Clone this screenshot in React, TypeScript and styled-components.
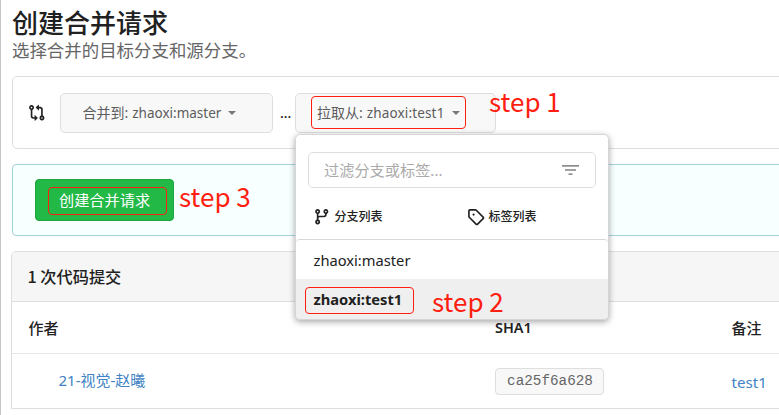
import React from "react";
import styled, { createGlobalStyle } from "styled-components";

const GlobalStyle = createGlobalStyle`
  * { box-sizing: border-box; }
  body {
    margin: 0;
    overflow: hidden;
    background: #fff;
    color: #212121;
    font-family: "Noto Sans", "Noto Sans CJK SC", sans-serif;
  }
`;

const Page = styled.main`
  position: relative;
  width: 779px;
  height: 415px;
  overflow: hidden;
  padding: 5px 0 0 11px;
  border-left: 1px solid #c4c4c6;
`;

const Title = styled.h1`
  margin: 0;
  font: 500 26px/34px "Noto Sans CJK SC", sans-serif;
`;

const Subtitle = styled.p`
  margin: 0;
  height: 37px;
  font: 400 17.45px/22px "Noto Sans CJK SC", sans-serif;
  color: #666;
`;

const CompareBar = styled.section`
  display: flex;
  align-items: flex-start;
  width: 790px;
  height: 73px;
  padding: 16px 0 0 15px;
  border: 1px solid #dededf;
  border-radius: 5px;
`;

const CompareIconSlot = styled.span`
  display: flex;
  width: 32px;
  padding-top: 11px;
`;

const Dots = styled.span`
  width: 22px;
  padding-left: 7px;
  font: 500 14px/39px "Noto Sans", sans-serif;
`;

const BranchSelect = styled.div<{ $width: number; $indent: number }>`
  position: relative;
  display: flex;
  align-items: center;
  width: ${(p) => p.$width}px;
  height: 40px;
  padding-left: ${(p) => p.$indent}px;
  border: 1px solid #dededf;
  border-radius: 5px;
  background: #f8f8f8;
  color: #5c5c5c;
  font-size: 14px;
  line-height: 20px;
  white-space: nowrap;
`;

const BranchName = styled.span<{ $spacing?: number }>`
  margin-left: 4px;
  font-size: 13.5px;
  letter-spacing: ${(p) => p.$spacing ?? 0}px;
`;

const Caret = styled.span`
  margin: 0 0 0 7px;
  border: 4px solid transparent;
  border-top-color: #777;
  border-bottom: 0;
`;

const Dropdown = styled.div`
  position: absolute;
  z-index: 2;
  top: 40px;
  left: -1px;
  width: 314px;
  height: 186px;
  border: 1px solid #d6d6d7;
  border-radius: 5px;
  background: #fff;
  color: #212121;
  box-shadow: 0 2px 6px rgba(34, 36, 38, 0.4);
  overflow: hidden;
`;

const FilterField = styled.div`
  display: flex;
  align-items: center;
  justify-content: space-between;
  height: 36px;
  margin: 17px 12px 0;
  padding: 0 16px 0 15px;
  border: 1px solid #dededf;
  border-radius: 5px;
  color: #aaa;
  font-size: 15.2px;
`;

const Tabs = styled.div`
  display: grid;
  grid-template-columns: 154px 1fr;
  height: 51px;
  padding: 18px 0 0 17px;
`;

const Tab = styled.div`
  display: flex;
  align-items: center;
  gap: 4px;
  height: 22px;
  font: 500 12px/20px "Noto Sans CJK SC", sans-serif;
`;

const TabLabel = styled.span`
  margin-top: -3px;
`;

const Options = styled.div`
  border-top: 1px solid #d9d9da;
  border-radius: 4px;
`;

const Option = styled.div<{ $selected?: boolean }>`
  height: ${(p) => (p.$selected ? 40 : 39)}px;
  padding-left: 17.5px;
  background: ${(p) => (p.$selected ? "#efefef" : "transparent")};
  font-size: 14.7px;
  font-weight: ${(p) => (p.$selected ? 700 : 400)};
  line-height: 41px;
`;

const CreatePanel = styled.section`
  width: 790px;
  height: 72px;
  margin-top: 15px;
  padding: 14px 22px;
  border: 1px solid #a3d3dc;
  border-radius: 4px;
  background: #f7ffff;
`;

const CreateButton = styled.button`
  display: block;
  width: 139px;
  height: 42px;
  padding: 0 0 2px;
  border: 1px solid #1ca43c;
  border-radius: 4px;
  background: #23b947;
  color: #fff;
  font: 400 15.2px/38px "Noto Sans CJK SC", sans-serif;
`;

const Commits = styled.section`
  width: 790px;
  margin: 15px 0 0 -1px;
  border: 1px solid #dededf;
  border-radius: 5px 5px 0 0;
`;

const CommitsHeader = styled.h2`
  height: 50px;
  margin: 0;
  padding-left: 15.5px;
  border-bottom: 1px solid #dededf;
  border-radius: 4px 4px 0 0;
  background: #f6f6f6;
  font: 500 16.2px/48px "Noto Sans CJK SC", sans-serif;
`;

const Row = styled.div<{ $head?: boolean }>`
  display: grid;
  grid-template-columns: 467px 236px 1fr;
  align-items: center;
  height: ${(p) => (p.$head ? 52 : 54)}px;
  padding-left: 16px;
  border-bottom: ${(p) => (p.$head ? "1px solid #e6e6e6" : "0")};
  font-size: 15.2px;
`;

const HeadCell = styled.span<{ $latin?: boolean }>`
  padding-left: ${(p) => (p.$latin ? 0 : 0.5)}px;
  font-size: ${(p) => (p.$latin ? 14.4 : 15)}px;
  font-weight: ${(p) => (p.$latin ? 600 : 500)};
`;

const Author = styled.a`
  padding: 0 0 4px 30.5px;
  color: #4183c4;
  font-size: 15px;
`;

const Sha = styled.code`
  width: 109px;
  height: 27px;
  padding-left: 1px;
  border: 1px solid #dededf;
  border-radius: 4px;
  background: #f8f8f8;
  color: #666;
  font: 14.3px/25px "Liberation Mono", monospace;
  text-align: center;
`;

const Message = styled.a`
  padding: 2px 0 0 0.5px;
  color: #4183c4;
`;

const Mark = styled.div<{ $x: number; $y: number; $w: number; $h: number }>`
  position: absolute;
  z-index: 3;
  left: ${(p) => p.$x - 1}px;
  top: ${(p) => p.$y}px;
  width: ${(p) => p.$w}px;
  height: ${(p) => p.$h}px;
  border: 1px solid #ff1e10;
  border-radius: 4px;
`;

const Step = styled.div<{ $x: number; $y: number }>`
  position: absolute;
  z-index: 3;
  left: ${(p) => p.$x - 1}px;
  top: ${(p) => p.$y}px;
  color: #ff1e10;
  font: 400 26px/30px "Noto Sans CJK SC", sans-serif;
  white-space: nowrap;
`;

const glyphs = {
  compare:
    "M9.573.677A.25.25 0 0 1 10 .854V2.5h1A2.5 2.5 0 0 1 13.5 5v5.628a2.251 2.251 0 1 1-1.5 0V5a1 1 0 0 0-1-1h-1v1.646a.25.25 0 0 1-.427.177L7.177 3.427a.25.25 0 0 1 0-.354L9.573.677zM6 12v-1.646a.25.25 0 0 1 .427-.177l2.396 2.396a.25.25 0 0 1 0 .354l-2.396 2.396A.25.25 0 0 1 6 15.146V13.5H5A2.5 2.5 0 0 1 2.5 11V5.372a2.25 2.25 0 1 1 1.5 0V11a1 1 0 0 0 1 1h1zM4 3.25a.75.75 0 1 0-1.5 0 .75.75 0 0 0 1.5 0zM12.75 12a.75.75 0 1 0 0 1.5.75.75 0 0 0 0-1.5z",
  branch:
    "M9.5 3.25a2.25 2.25 0 1 1 3 2.122V6A2.5 2.5 0 0 1 10 8.5H6a1 1 0 0 0-1 1v1.128a2.251 2.251 0 1 1-1.5 0V5.372a2.25 2.25 0 1 1 1.5 0v1.836A2.493 2.493 0 0 1 6 7h4a1 1 0 0 0 1-1v-.628A2.25 2.25 0 0 1 9.5 3.25zm-6 0a.75.75 0 1 0 1.5 0 .75.75 0 0 0-1.5 0zm8.25-.75a.75.75 0 1 0 0 1.5.75.75 0 0 0 0-1.5zM4.25 12a.75.75 0 1 0 0 1.5.75.75 0 0 0 0-1.5z",
  tag: "M1 7.775V2.75C1 1.784 1.784 1 2.75 1h5.025c.464 0 .91.184 1.238.513l6.25 6.25a1.75 1.75 0 0 1 0 2.474l-5.026 5.026a1.75 1.75 0 0 1-2.474 0l-6.25-6.25A1.752 1.752 0 0 1 1 7.775zm1.5 0c0 .066.026.13.073.177l6.25 6.25a.25.25 0 0 0 .354 0l5.025-5.025a.25.25 0 0 0 0-.354l-6.25-6.25a.25.25 0 0 0-.177-.073H2.75a.25.25 0 0 0-.25.25zM6 5a1 1 0 1 1 0 2 1 1 0 0 1 0-2z",
};

const Icon = ({ name }: { name: keyof typeof glyphs }) => (
  <svg width="17.5" height="17.5" viewBox="0 0 16 16" fill="#212121" fillRule="evenodd">
    <path d={glyphs[name]} />
  </svg>
);

const FilterIcon = () => (
  <svg width="17" height="12" viewBox="0 0 17 12" fill="#8c8c8c">
    <rect x="0" y="1" width="17" height="1.7" />
    <rect x="3" y="5.2" width="11" height="1.6" />
    <rect x="6.5" y="9.4" width="4" height="1.6" />
  </svg>
);

export default function App() {
  return (
    <>
      <GlobalStyle />
      <Page>
        <Title>创建合并请求</Title>
        <Subtitle>选择合并的目标分支和源分支。</Subtitle>

        <CompareBar>
          <CompareIconSlot>
            <Icon name="compare" />
          </CompareIconSlot>
          <BranchSelect $width={213} $indent={21.5}>
            合并到:<BranchName>zhaoxi:master</BranchName>
            <Caret />
          </BranchSelect>
          <Dots>...</Dots>
          <BranchSelect $width={201} $indent={21}>
            拉取从:<BranchName $spacing={0.15}>zhaoxi:test1</BranchName>
            <Caret />
            <Dropdown>
              <FilterField>
                <span>过滤分支或标签...</span>
                <FilterIcon />
              </FilterField>
              <Tabs>
                <Tab>
                  <Icon name="branch" />
                  <TabLabel>分支列表</TabLabel>
                </Tab>
                <Tab>
                  <Icon name="tag" />
                  <TabLabel>标签列表</TabLabel>
                </Tab>
              </Tabs>
              <Options>
                <Option>zhaoxi:master</Option>
                <Option $selected>zhaoxi:test1</Option>
              </Options>
            </Dropdown>
          </BranchSelect>
        </CompareBar>

        <CreatePanel>
          <CreateButton>创建合并请求</CreateButton>
        </CreatePanel>

        <Commits>
          <CommitsHeader>1 次代码提交</CommitsHeader>
          <Row $head>
            <HeadCell>作者</HeadCell>
            <HeadCell $latin>SHA1</HeadCell>
            <HeadCell>备注</HeadCell>
          </Row>
          <Row>
            <Author>21-视觉-赵曦</Author>
            <Sha>ca25f6a628</Sha>
            <Message>test1</Message>
          </Row>
        </Commits>

        <Mark $x={311} $y={96} $w={155} $h={33} />
        <Mark $x={305} $y={287} $w={109} $h={27} />
        <Mark $x={48} $y={187} $w={119} $h={28} />
        <Step $x={489} $y={86}>step 1</Step>
        <Step $x={432} $y={286}>step 2</Step>
        <Step $x={179} $y={181}>step 3</Step>
      </Page>
    </>
  );
}
